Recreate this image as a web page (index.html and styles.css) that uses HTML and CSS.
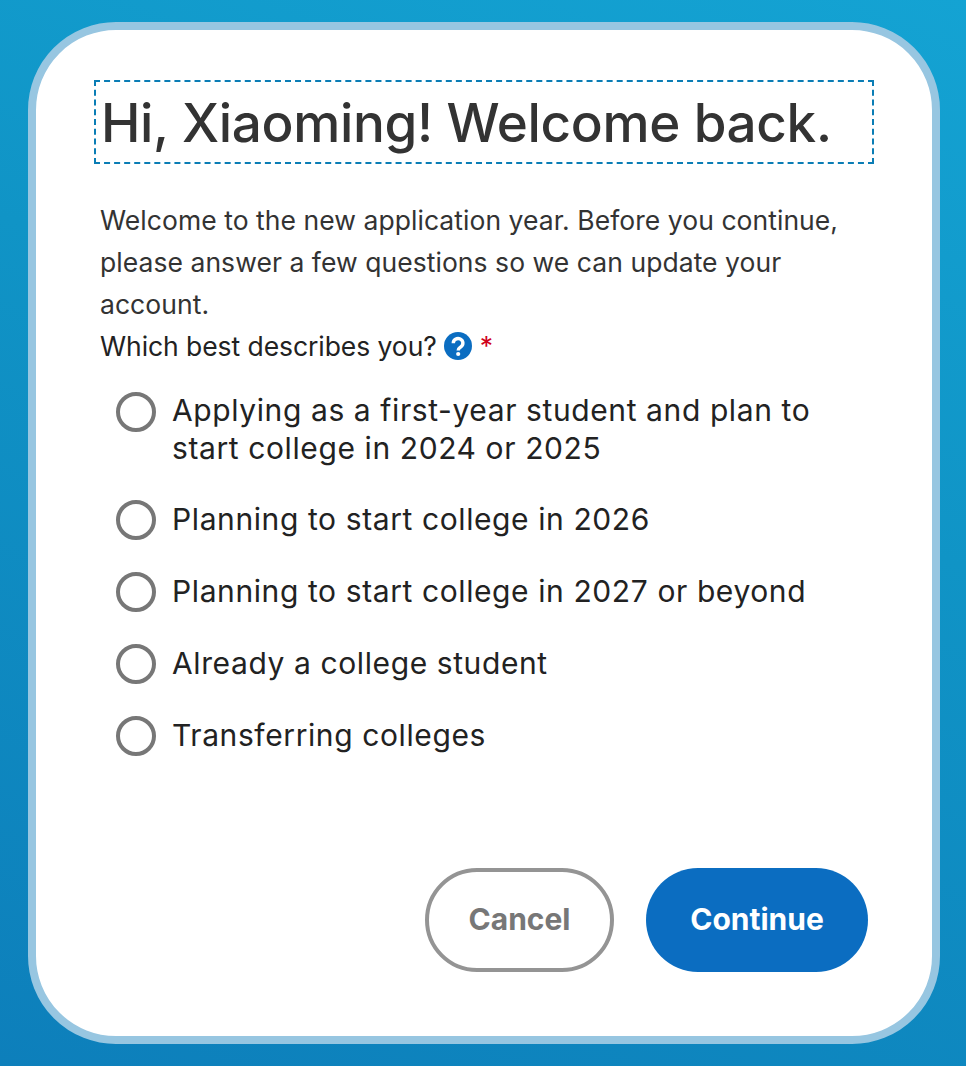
FILE: index.html
```html
<!DOCTYPE html>
<html lang="en">
<head>
<meta charset="utf-8">
<title>Welcome back</title>
<link rel="stylesheet" href="styles.css">
</head>
<body>
<main class="card">
  <div class="title-box"><h1>Hi, Xiaoming! Welcome back.</h1></div>
  <p class="intro">Welcome to the new application year. Before you continue, please answer a few questions so we can update your account.</p>
  <div class="question">
    <span>Which best describes you?</span>
    <svg class="help" viewBox="0 0 28 28" aria-hidden="true">
      <circle cx="14" cy="14" r="14" fill="#0b6dc1"/>
      <path d="M9.3 11.2a4.8 4.6 0 1 1 7.6 3.6c-1.6 1.2-2.7 1.8-2.7 3.6" fill="none" stroke="#fff" stroke-width="3.4"/>
      <circle cx="14.2" cy="22" r="2.1" fill="#fff"/>
    </svg>
    <span class="req">*</span>
  </div>
  <div class="options">
    <label class="option two"><span class="radio"></span><span class="opt-text">Applying as a first-year student and plan to start college in 2024 or 2025</span></label>
    <label class="option"><span class="radio"></span><span class="opt-text">Planning to start college in 2026</span></label>
    <label class="option"><span class="radio"></span><span class="opt-text">Planning to start college in 2027 or beyond</span></label>
    <label class="option"><span class="radio"></span><span class="opt-text">Already a college student</span></label>
    <label class="option"><span class="radio"></span><span class="opt-text">Transferring colleges</span></label>
  </div>
  <div class="actions">
    <button class="btn cancel" type="button">Cancel</button>
    <button class="btn primary" type="button">Continue</button>
  </div>
</main>
</body>
</html>
```

FILE: styles.css
```css
html, body { margin: 0; height: 100%; }
body {
  width: 966px; height: 1066px; overflow: hidden; box-sizing: border-box;
  padding: 22px 26px 22px 28px;
  background: linear-gradient(200deg, #14a3d3 0%, #1094c6 40%, #0d7fbb 100%);
  font-family: Inter, "Liberation Sans", sans-serif;
}
.card {
  box-sizing: border-box; height: 1022px; width: 912px;
  background: #fff; border: 8px solid #97c6e1; border-radius: 88px;
  padding: 50px 58px 64px 58px;
  display: flex; flex-direction: column;
}
.title-box {
  border: 2px dashed #0a7db5; height: 84px; box-sizing: border-box;
  display: flex; align-items: center; padding: 2px 0 0 5px;
  width: 780px;
}
h1 { margin: 0; font-size: 53px; font-weight: 550; color: #333; letter-spacing: -0.35px; white-space: nowrap; }
.intro {
  margin: 35px 0 0 6px; width: 745px;
  font-size: 26.5px; line-height: 42px; color: #333; letter-spacing: 0.05px;
}
.question {
  margin-left: 6px; display: flex; align-items: center; height: 41px;
  font-size: 26.5px; color: #222; letter-spacing: -0.07px;
}
.help { width: 28px; height: 28px; margin-left: 7px; }
.req { color: #d0021b; margin-left: 8px; }
.options { margin: 26px 0 0 22px; display: flex; flex-direction: column; }
.option { display: flex; align-items: center; gap: 16px; height: 72px; }
.option.two { height: 76px; margin-bottom: 16px; }
.radio {
  box-sizing: border-box; width: 40px; height: 40px; flex: none;
  border: 4px solid #777; border-radius: 50%; background: #fff;
}
.two .radio { align-self: flex-start; }
.opt-text { font-size: 30px; line-height: 38px; color: #222; letter-spacing: 0.6px; width: 660px; padding-bottom: 2px; }
.actions { margin-top: auto; display: flex; justify-content: flex-end; gap: 32px; padding-right: 6px; }
.btn {
  height: 104px; border-radius: 52px; font-family: inherit;
  font-size: 30px; font-weight: 700; box-sizing: border-box; padding: 0 0 2px;
}
.cancel { width: 189px; background: #fff; border: 4px solid #949494; color: #777; }
.primary { width: 222px; background: #0b6dc1; border: none; color: #fff; }
```
